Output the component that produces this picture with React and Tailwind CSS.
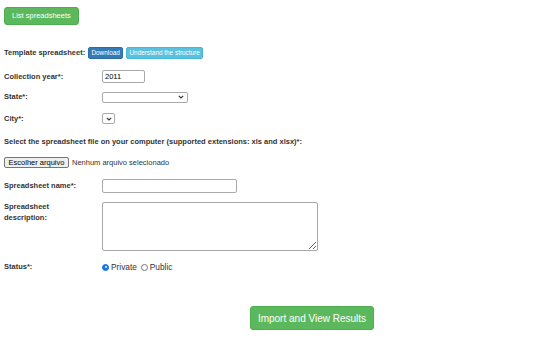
import React from "react";

function Chevron() {
  return (
    <svg width="6" height="4" viewBox="0 0 6 4" className="block">
      <path d="M0.8 0.8 L3 3 L5.2 0.8" fill="none" stroke="#333" strokeWidth="1.1" />
    </svg>
  );
}

function Label({ children }) {
  return <div className="w-[98px] shrink-0 font-bold text-[#333] leading-[10px]">{children}</div>;
}

export default function App() {
  return (
    <div
      className="w-[556px] h-[340px] bg-white text-[7.5px] text-[#333] overflow-hidden"
      style={{ fontFamily: '"Liberation Sans", Arial, sans-serif' }}
    >
      <div className="pl-[4px] pt-[7px] flex flex-col">
        <div className="flex">
          <div className="h-[18px] px-[7px] flex items-center rounded-[3px] bg-[#5cb85c] border border-[#4cae4c] text-white">
            List spreadsheets
          </div>
        </div>

        <div className="mt-[22px] flex items-center h-[12px]">
          <span className="font-bold mr-[3px]">Template spreadsheet:</span>
          <span className="h-[12px] w-[35px] flex items-center justify-center rounded-[2px] bg-[#337ab7] border border-[#2e6da4] text-white text-[6.4px]">
            Download
          </span>
          <span className="ml-[3px] h-[12px] w-[77px] flex items-center justify-center rounded-[2px] bg-[#5bc0de] border border-[#46b8da] text-white text-[6.4px]">
            Understand the structure
          </span>
        </div>

        <div className="mt-[11px] flex items-center h-[13px]">
          <Label>Collection year*:</Label>
          <div className="w-[43px] h-[13px] border border-[#a9a9a9] rounded-[2px] flex items-center pl-[2px] text-black">
            2011
          </div>
        </div>

        <div className="mt-[9px] flex items-center h-[10px]">
          <Label>State*:</Label>
          <div className="w-[86px] h-[11px] border border-[#a9a9a9] rounded-[2px] flex items-center justify-end pr-[3px]">
            <Chevron />
          </div>
        </div>

        <div className="mt-[11px] flex items-center h-[11px]">
          <Label>City*:</Label>
          <div className="w-[13px] h-[11px] border border-[#a9a9a9] rounded-[2px] flex items-center justify-center">
            <Chevron />
          </div>
        </div>

        <div className="mt-[13px] h-[10px] flex items-center font-bold">
          Select the spreadsheet file on your computer (supported extensions: xls and xlsx)*:
        </div>

        <div className="mt-[10px] flex items-center h-[11px]">
          <div className="h-[11px] w-[65px] flex items-center justify-center bg-[#efefef] border border-[#767676] rounded-[2px] text-black">
            Escolher arquivo
          </div>
          <span className="ml-[3px] text-[#333]">Nenhum arquivo selecionado</span>
        </div>

        <div className="mt-[11px] flex items-center h-[14px]">
          <Label>Spreadsheet name*:</Label>
          <div className="w-[135px] h-[14px] border border-[#a9a9a9] rounded-[2px]" />
        </div>

        <div className="mt-[9px] flex items-start">
          <div className="w-[98px] shrink-0 font-bold leading-[10.5px] pt-[0px]">
            Spreadsheet
            <br />
            description:
          </div>
          <textarea
            className="w-[216px] h-[49px] border border-[#a9a9a9] rounded-[2px] resize-y outline-none"
            readOnly
          />
        </div>

        <div className="mt-[11px] flex items-center h-[10px]">
          <Label>Status*:</Label>
          <span className="w-[7px] h-[7px] rounded-full bg-[#1a73e8] border border-[#1a73e8] flex items-center justify-center">
            <span className="w-[2px] h-[2px] rounded-full bg-white" />
          </span>
          <span className="ml-[2px] text-[#333] text-[8.3px]">Private</span>
          <span className="ml-[4px] w-[7px] h-[7px] rounded-full border border-[#767676] bg-white" />
          <span className="ml-[2px] text-[#333] text-[8.3px]">Public</span>
        </div>

        <div className="mt-[34px] flex pl-[246px]">
          <div className="h-[24px] w-[124px] flex items-center justify-center rounded-[3px] bg-[#5cb85c] border border-[#4cae4c] text-white text-[10px]">
            Import and View Results
          </div>
        </div>
      </div>
    </div>
  );
}
